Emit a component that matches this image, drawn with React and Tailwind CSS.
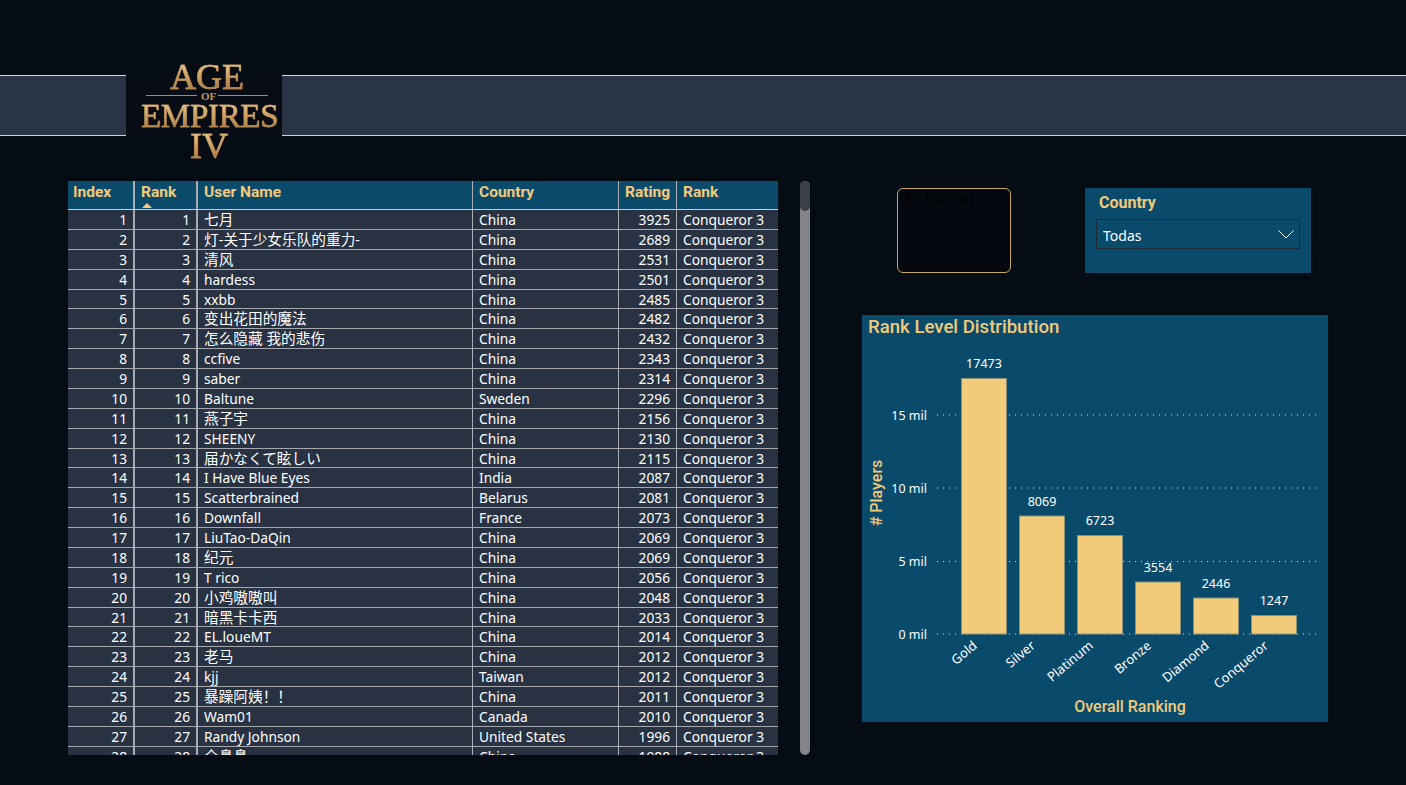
const rows = [
  ['七月', 'China', 3925],
  ['灯-关于少女乐队的重力-', 'China', 2689],
  ['清风', 'China', 2531],
  ['hardess', 'China', 2501],
  ['xxbb', 'China', 2485],
  ['变出花田的魔法', 'China', 2482],
  ['怎么隐藏 我的悲伤', 'China', 2432],
  ['ccfive', 'China', 2343],
  ['saber', 'China', 2314],
  ['Baltune', 'Sweden', 2296],
  ['燕子宇', 'China', 2156],
  ['SHEENY', 'China', 2130],
  ['届かなくて眩しい', 'China', 2115],
  ['I Have Blue Eyes', 'India', 2087],
  ['Scatterbrained', 'Belarus', 2081],
  ['Downfall', 'France', 2073],
  ['LiuTao-DaQin', 'China', 2069],
  ['纪元', 'China', 2069],
  ['T rico', 'China', 2056],
  ['小鸡嗷嗷叫', 'China', 2048],
  ['暗黑卡卡西', 'China', 2033],
  ['EL.loueMT', 'China', 2014],
  ['老马', 'China', 2012],
  ['kjj', 'Taiwan', 2012],
  ['暴躁阿姨！！', 'China', 2011],
  ['Wam01', 'Canada', 2010],
  ['Randy Johnson', 'United States', 1996],
  ['全鼻鼻', 'China', 1988],
]

const bars = [
  { label: 'Gold', value: 17473, x: 961, top: 378.5, labelY: 368, end: 978 },
  { label: 'Silver', value: 8069, x: 1019, top: 516, labelY: 506, end: 1036 },
  { label: 'Platinum', value: 6723, x: 1077, top: 535.5, labelY: 525, end: 1094 },
  { label: 'Bronze', value: 3554, x: 1135, top: 582, labelY: 572, end: 1152 },
  { label: 'Diamond', value: 2446, x: 1193, top: 598, labelY: 588, end: 1210 },
  { label: 'Conqueror', value: 1247, x: 1251, top: 615.5, labelY: 605, end: 1269 },
]

const ticks = [
  { label: '15 mil', y: 415 },
  { label: '10 mil', y: 488 },
  { label: '5 mil', y: 561.5 },
  { label: '0 mil', y: 634 },
]

const bodyFont = { fontFamily: '"Noto Sans", "Noto Sans CJK SC", sans-serif' }

function Logo() {
  const gold =
    'bg-gradient-to-b from-[#f3dba6] via-[#cda062] to-[#93683a] bg-clip-text text-transparent [-webkit-text-stroke:0.5px_#c89a5c]'
  return (
    <div className="relative ml-[126px] mt-[-1px] h-[61px] w-[156px] bg-[#080d15] font-['Liberation_Serif',serif]">
      <div className={`absolute left-[44px] top-[-18px] text-[36px] leading-[40px] ${gold}`}>AGE</div>
      <div className="absolute left-[20px] top-[20px] h-px w-[51px] bg-[#a88d60]" />
      <div className="absolute left-[92px] top-[20px] h-px w-[50px] bg-[#a88d60]" />
      <div className="absolute left-[75px] top-[15px] text-[11px] font-bold leading-[12px] text-[#c29a60]">OF</div>
      <div className={`absolute left-[15px] top-[22px] text-[33px] leading-[38px] tracking-[-0.3px] ${gold}`}>EMPIRES</div>
      <div className={`absolute left-[64px] top-[51px] text-[36px] leading-[40px] ${gold}`}>IV</div>
    </div>
  )
}

function HeaderCell({ className, children }) {
  return (
    <div className={`h-full shrink-0 border-r border-[#a9adb3] px-[6px] pt-[1px] text-[15.5px] font-bold leading-[21px] text-[#f2ca7a] ${className}`}>
      {children}
    </div>
  )
}

function Cell({ className, children }) {
  return (
    <div className={`h-full shrink-0 overflow-hidden whitespace-nowrap border-r border-[#a9adb3] px-[6px] ${className}`}>
      {children}
    </div>
  )
}

function RankingTable() {
  return (
    <div className="h-[574px] w-[710px] overflow-hidden bg-[#283243]">
      <div className="flex h-[29px] border-b border-[#f2ca7a] bg-[#0a4a6a] font-['Roboto',sans-serif]">
        <HeaderCell className="w-[67px] border-r-2 pl-[5px]">Index</HeaderCell>
        <HeaderCell className="relative w-[63px] border-r-2">
          Rank
          <span className="absolute bottom-[1px] left-[7px] h-0 w-0 border-x-[5px] border-b-[5px] border-x-transparent border-b-[#f2ca7a]" />
        </HeaderCell>
        <HeaderCell className="w-[275px]">User Name</HeaderCell>
        <HeaderCell className="w-[146px]">Country</HeaderCell>
        <HeaderCell className="w-[58px]">Rating</HeaderCell>
        <HeaderCell className="w-[101px] border-r-0">Rank</HeaderCell>
      </div>
      <div style={bodyFont}>
        {rows.map((row, i) => (
          <div key={i} className="flex h-[19.88px] border-b border-[#a7a9ae] text-[13.75px] leading-[20px] text-white">
            <Cell className="w-[67px] border-r-2 text-right">{i + 1}</Cell>
            <Cell className="w-[63px] border-r-2 text-right">{i + 1}</Cell>
            <Cell className={/[^\x00-\x7f]/.test(row[0]) ? 'w-[275px] text-[14.67px] leading-[19px]' : 'w-[275px]'}>{row[0]}</Cell>
            <Cell className="w-[146px]">{row[1]}</Cell>
            <Cell className="w-[58px] text-right">{row[2]}</Cell>
            <Cell className="w-[101px] border-r-0">Conqueror 3</Cell>
          </div>
        ))}
      </div>
    </div>
  )
}

function Slicers() {
  return (
    <div className="mt-[7px] flex h-[85px]">
      <div
        className="ml-[35px] h-full w-[114px] rounded-[6px] border border-[#c9a860] bg-[#05090f] pl-[3px] text-[14px] leading-[18px] text-black"
        style={bodyFont}
      >
        (En blanco)
      </div>
      <div className="ml-[74px] h-full w-[226px] bg-[#0a4a6a] px-[11px] pt-[5px]">
        <div className="pl-[3px] font-['Roboto',sans-serif] text-[16px] font-bold leading-[20px] text-[#f2ca7a]">
          Country
        </div>
        <div className="mt-[6px] flex h-[30px] items-center justify-between border border-[#1f2a33] pl-[6px] pr-[5px] text-[14px] text-white" style={bodyFont}>
          <span className="pt-[2px]">Todas</span>
          <svg width="16" height="9" viewBox="0 0 16 9" fill="none" stroke="#ffffff" strokeWidth="1">
            <polyline points="0.5,0.5 8,8 15.5,0.5" />
          </svg>
        </div>
      </div>
    </div>
  )
}

function DistributionChart() {
  return (
    <div className="mt-[42px] h-[407px] w-[466px] bg-[#0a4a6a]">
      <div className="h-[24px] pl-[6px] font-['Roboto',sans-serif] text-[18.6px] font-medium leading-[24px] text-[#f2ca7a]">
        Rank Level Distribution
      </div>
      <svg width="466" height="383" viewBox="862 339 466 383" fontFamily="Noto Sans, sans-serif">
        {ticks.map((t) => (
          <g key={t.label}>
            <line x1="937" x2="1320" y1={t.y} y2={t.y} stroke="#d5dde2" strokeWidth="1" strokeDasharray="1 5" />
            <text x="927" y={t.y + 4.5} textAnchor="end" fontSize="12.5" fill="#ffffff">{t.label}</text>
          </g>
        ))}
        {bars.map((b) => (
          <g key={b.label}>
            <rect x={b.x + 0.5} y={b.top} width="45" height={634 - b.top} fill="#f2cb7a" stroke="#8a9178" strokeWidth="1" />
            <text x={b.x + 23} y={b.labelY} textAnchor="middle" fontSize="12.5" fill="#ffffff">{b.value}</text>
            <text
              x={b.end}
              y="647"
              textAnchor="end"
              fontSize="13"
              fill="#ffffff"
              transform={`rotate(-40 ${b.end} 647)`}
            >
              {b.label}
            </text>
          </g>
        ))}
        <text x="1130" y="712" textAnchor="middle" fontFamily="Roboto, sans-serif" fontWeight="500" fontSize="16" fill="#f2ca7a">
          Overall Ranking
        </text>
        <text
          x="882"
          y="493"
          textAnchor="middle"
          fontFamily="Roboto, sans-serif"
          fontWeight="500"
          fontSize="16"
          fill="#f2ca7a"
          transform="rotate(-90 882 493)"
        >
          # Players
        </text>
      </svg>
    </div>
  )
}

export default function App() {
  return (
    <div className="h-screen w-full overflow-hidden bg-[#050c13] pt-[75px]">
      <div className="h-[61px] border-y border-[#d8d4cc] bg-[#2a3447]">
        <Logo />
      </div>
      <div className="flex pl-[68px] pt-[45px]">
        <RankingTable />
        <div className="relative ml-[22px] h-[574px] w-[10px] rounded-[5px] bg-[#83858a]">
          <div className="h-[30px] w-full rounded-[5px] bg-[#3c3f45]" />
        </div>
        <div className="ml-[52px] w-[466px]">
          <Slicers />
          <DistributionChart />
        </div>
      </div>
    </div>
  )
}
